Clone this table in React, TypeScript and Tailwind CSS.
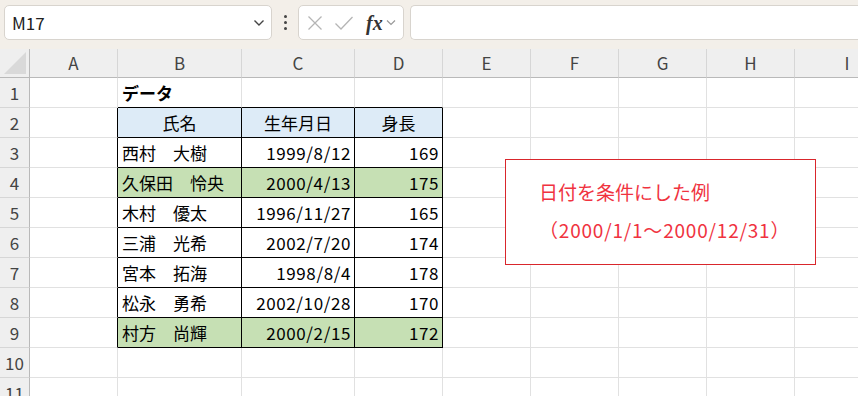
import React from 'react';

const cols = ['A', 'B', 'C', 'D', 'E', 'F', 'G', 'H', 'I'];

type Row = { name: string; date: string; height: string; hit?: boolean };

const people: Row[] = [
  { name: '西村　大樹', date: '1999/8/12', height: '169' },
  { name: '久保田　怜央', date: '2000/4/13', height: '175', hit: true },
  { name: '木村　優太', date: '1996/11/27', height: '165' },
  { name: '三浦　光希', date: '2002/7/20', height: '174' },
  { name: '宮本　拓海', date: '1998/8/4', height: '178' },
  { name: '松永　勇希', date: '2002/10/28', height: '170' },
  { name: '村方　尚輝', date: '2000/2/15', height: '172', hit: true },
];

const font = { fontFamily: '"Noto Sans CJK JP", "Noto Sans", sans-serif' };

const TopBar: React.FC = () => (
  <div className="flex h-[49px] items-start bg-[#f3efe9] pl-[4px] pt-[5px]">
    <div className="flex h-[35px] w-[268px] items-center justify-between rounded-[5px] border border-[#d8d4ce] bg-white pl-[7px] pr-[6px]">
      <span className="text-[17px] text-[#222]">M17</span>
      <svg width="12" height="8" viewBox="0 0 12 8" fill="none" stroke="#444" strokeWidth="1.4">
        <path d="M1.5 1.5 6 6l4.5-4.5" />
      </svg>
    </div>
    <div className="flex h-[35px] w-[26px] flex-col items-center justify-center gap-[3px]">
      <span className="h-[3px] w-[3px] rounded-full bg-[#444]" />
      <span className="h-[3px] w-[3px] rounded-full bg-[#444]" />
      <span className="h-[3px] w-[3px] rounded-full bg-[#444]" />
    </div>
    <div className="flex h-[35px] w-[106px] items-center rounded-[5px] border border-[#d8d4ce] bg-white pl-[8px]">
      <svg width="16" height="16" viewBox="0 0 16 16" fill="none" stroke="#b5b5b5" strokeWidth="1.3">
        <path d="M1.5 1.5l13 13M14.5 1.5l-13 13" />
      </svg>
      <svg className="ml-[11px]" width="20" height="16" viewBox="0 0 20 16" fill="none" stroke="#b5b5b5" strokeWidth="1.3">
        <path d="M1.5 8.5l5.5 5.5L18.5 2" />
      </svg>
      <span
        className="ml-[12px] text-[20px] font-bold italic text-[#333]"
        style={{ fontFamily: '"Liberation Serif", serif' }}
      >
        fx
      </span>
      <svg className="ml-[3px]" width="10" height="7" viewBox="0 0 10 7" fill="none" stroke="#999" strokeWidth="1.2">
        <path d="M1 1.5 5 5.5l4-4" />
      </svg>
    </div>
    <div className="ml-[6px] h-[35px] flex-1 rounded-l-[5px] border border-r-0 border-[#d8d4ce] bg-white" />
  </div>
);

const Grid: React.FC = () => {
  const rowCount = 11;
  const cells: React.ReactNode[] = [];

  // header row
  cells.push(
    <div key="corner" className="relative border-b border-r border-[#b9b9b9] bg-[#efefef]">
      <svg className="absolute bottom-[3px] right-[3px]" width="22" height="22" viewBox="0 0 22 22">
        <path d="M0 22 22 0v22z" fill="#d9d9d9" />
      </svg>
    </div>
  );
  cols.forEach((c) => {
    cells.push(
      <div
        key={'h' + c}
        className="flex items-center justify-center border-b border-r border-b-[#b9b9b9] border-r-[#d6d6d6] bg-[#efefef] text-[17px] text-[#444]"
      >
        {c}
      </div>
    );
  });

  for (let r = 1; r <= rowCount; r++) {
    cells.push(
      <div
        key={'r' + r}
        className="flex items-center justify-center border-b border-r border-b-[#d6d6d6] border-r-[#b9b9b9] bg-[#efefef] text-[17px] text-[#444]"
      >
        {r}
      </div>
    );
    const inTable = r >= 2 && r <= 9;
    const person = r >= 3 && r <= 9 ? people[r - 3] : undefined;
    cols.forEach((c, ci) => {
      const tableCol = ci >= 1 && ci <= 3;
      let cls = 'flex items-center border-b border-r text-[17px] text-black ';
      let content: React.ReactNode = null;
      if (inTable && tableCol) {
        cls += 'border-black ';
        if (r === 2) {
          cls += 'justify-center bg-[#ddebf7] ';
          content = ['氏名', '生年月日', '身長'][ci - 1];
        } else if (person) {
          if (person.hit) cls += 'bg-[#c6e0b4] ';
          if (ci === 1) {
            cls += 'pl-[4px] ';
            content = person.name;
          } else {
            cls += 'justify-end pr-[3px] tracking-[0.6px] ';
            content = ci === 2 ? person.date : person.height;
          }
        }
      } else if (r === 1 && tableCol) {
        cls += 'border-b-black border-r-[#e1e1e1] ';
        if (ci === 1) {
          cls += 'pl-[4px] font-bold ';
          content = 'データ';
        }
      } else if (inTable && ci === 0) {
        cls += 'border-b-[#e1e1e1] border-r-black ';
      } else {
        cls += 'border-[#e1e1e1] ';
      }
      cells.push(
        <div key={r + c} className={cls}>
          {content}
        </div>
      );
    });
  }

  return (
    <div className="relative overflow-hidden">
      <div className="grid w-[900px] grid-cols-[30px_88px_124px_113px_88px_88px_88px_88px_88px_1fr] grid-rows-[29px_repeat(11,30px)] bg-white">
        {cells}
      </div>
      {/* text box shape */}
      <div className="absolute left-[505px] top-[110px] flex h-[106px] w-[311px] flex-col border border-[#d9262c] bg-white pl-[33px] pt-[13px] text-[19px] leading-[38px] text-[#f0333f]">
        <span>日付を条件にした例</span>
        <span className="tracking-[0.8px]">（2000/1/1～2000/12/31）</span>
      </div>
    </div>
  );
};

const App: React.FC = () => {
  return (
    <div className="h-[396px] w-[858px] overflow-hidden bg-white" style={font}>
      <TopBar />
      <Grid />
    </div>
  );
};

export default App;
